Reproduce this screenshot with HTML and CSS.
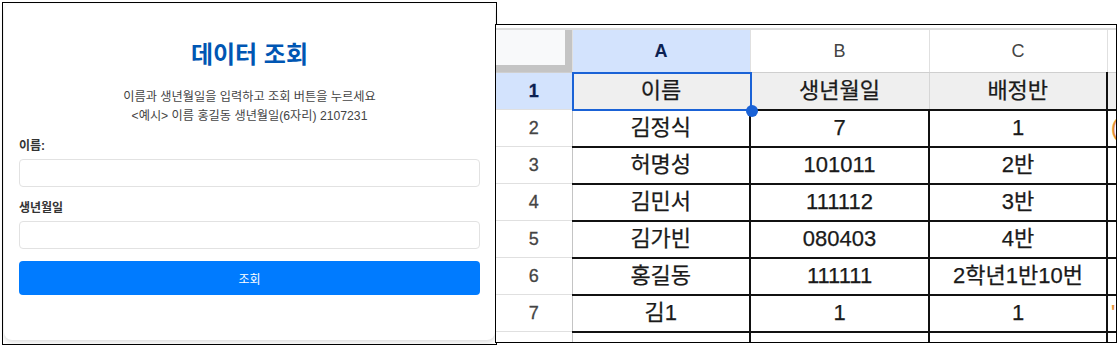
FILE: index.html
```html
<!DOCTYPE html>
<html lang="ko">
<head>
  <meta charset="UTF-8" />
  <meta name="viewport" content="width=device-width, initial-scale=1.0"/>
  <title>데이터 조회</title>
  <link rel="stylesheet" href="styles.css">
</head>
<body>
  <div class="panel">
    <div class="card">
      <h1>데이터 조회</h1>
      <p class="guide">이름과 생년월일을 입력하고 조회 버튼을 누르세요<br>&lt;예시&gt; 이름 홍길동 생년월일(6자리) 2107231</p>
      <form id="searchForm">
        <label for="name">이름:</label>
        <input type="text" id="name" name="name" />
        <label for="birth" class="second">생년월일</label>
        <input type="text" id="birth" name="birth" />
        <button type="submit">조회</button>
      </form>
    </div>
  </div>

  <div class="sheet">
    <table class="grid">
      <colgroup>
        <col class="c-row"><col class="c-a"><col class="c-b"><col class="c-c"><col class="c-d">
      </colgroup>
      <thead>
        <tr>
          <th class="corner"></th>
          <th class="col-head active">A</th>
          <th class="col-head">B</th>
          <th class="col-head">C</th>
          <th class="col-head"></th>
        </tr>
      </thead>
      <tbody>
        <tr class="title-row">
          <th class="row-head active">1</th>
          <td class="selected">이름<span class="handle"></span></td>
          <td>생년월일</td>
          <td class="last">배정반</td>
          <td></td>
        </tr>
        <tr><th class="row-head">2</th><td>김정식</td><td>7</td><td>1</td><td class="peek">(</td></tr>
        <tr><th class="row-head">3</th><td>허명성</td><td>101011</td><td>2반</td><td></td></tr>
        <tr><th class="row-head">4</th><td>김민서</td><td>111112</td><td>3반</td><td></td></tr>
        <tr><th class="row-head">5</th><td>김가빈</td><td>080403</td><td>4반</td><td></td></tr>
        <tr><th class="row-head">6</th><td>홍길동</td><td>111111</td><td>2학년1반10번</td><td></td></tr>
        <tr><th class="row-head">7</th><td>김1</td><td>1</td><td>1</td><td class="peek">'</td></tr>
        <tr><th class="row-head"></th><td></td><td></td><td></td><td></td></tr>
      </tbody>
    </table>
  </div>

  <script>
    document.getElementById('searchForm').addEventListener('submit', (e) => {
      e.preventDefault();
    });
  </script>
</body>
</html>
```

FILE: styles.css
```css
body { margin: 0; padding: 2px 0 0 2px; display: flex; align-items: flex-start; background: #fff; font-family: "Liberation Sans", "Noto Sans CJK KR", sans-serif; }

/* left: search form */
.panel { width: 495px; height: 343px; box-sizing: border-box; border: 1px solid #000; padding: 1px; background: #fff; }
.card { height: 336px; box-sizing: border-box; padding: 35px 15px 0; border-radius: 8px; background: #fff; box-shadow: 0 2px 5px rgba(0,0,0,0.15); }
.card h1 { margin: 0; font-size: 24px; line-height: 32px; text-align: center; color: #0056b3; font-weight: bold; }
.guide { margin: 17px 0 0; font-size: 12.2px; line-height: 19px; text-align: center; color: #444; }
form label { display: block; margin: 12px 0 5px; font-size: 12px; line-height: 16px; font-weight: bold; color: #333; }
form label.second { margin-top: 13px; }
form input { display: block; width: 100%; height: 28px; box-sizing: border-box; border: 1px solid #e2e2e2; border-radius: 4px; padding: 0 8px; }
form button { display: block; width: 100%; height: 34px; margin-top: 12px; border: none; border-radius: 4px; background: #007bff; color: #fff; font-family: inherit; font-size: 12px; cursor: pointer; }

/* right: spreadsheet */
.sheet { width: 622px; height: 319px; margin: 22px 0 0 -2px; box-sizing: border-box; border: 1px solid #000; padding-top: 3px; overflow: hidden; background: #fff; }
.grid { border-collapse: collapse; table-layout: fixed; width: 671px; border-top: 2px solid #dcdcdc; }
.c-row { width: 76px; }
.c-a { width: 178px; }
.c-b { width: 179px; }
.c-c { width: 178px; }
.c-d { width: 60px; }
.grid th, .grid td { padding: 0; text-align: center; vertical-align: middle; white-space: nowrap; overflow: hidden; line-height: 22px; }
.grid thead th { height: 42px; font-size: 18px; font-weight: normal; color: #444; border-right: 1px solid #e0e0e0; border-bottom: 1px solid #cfcfcf; }
.grid th.corner { background: #f8f9fa; box-shadow: inset -7px -7px 0 #c4c4c4; }
.grid th.active { background: #d3e3fd; color: #0b2152; font-weight: bold; }
.grid .row-head { height: 36px; font-size: 18px; font-weight: normal; color: #444; border-right: 1px solid #c4c4c4; border-bottom: 1px solid #e0e0e0; -webkit-text-stroke: 0.3px currentColor; }
.grid td { font-size: 22px; color: #1a1a1a; border-right: 2px solid #111; border-bottom: 2px solid #111; -webkit-text-stroke: 0.25px currentColor; }
.title-row td { background: #efefef; border-right: 1px solid #d6d6d6; }
.title-row td.last { border-right: 2px solid #111; }
.grid td.peek { text-align: left; color: #e69138; padding-left: 3px; }
.grid td.selected { position: relative; overflow: visible; }
.grid td.selected::after { content: ""; position: absolute; left: -1px; top: -1px; right: -2px; bottom: -2px; border: 2px solid #1a62d6; pointer-events: none; }
.handle { position: absolute; right: -8px; bottom: -8px; width: 12px; height: 12px; border-radius: 50%; background: #1a62d6; z-index: 2; }
```
